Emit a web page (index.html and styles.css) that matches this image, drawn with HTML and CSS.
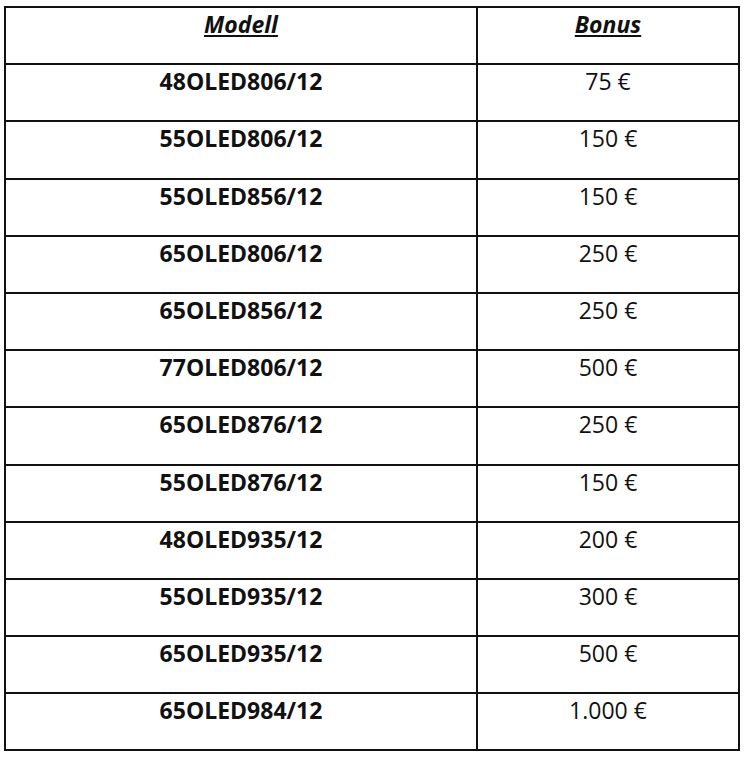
FILE: index.html
```html
<!DOCTYPE html>
<html lang="de">
<head>
<meta charset="utf-8">
<title>Bonus</title>
<link rel="stylesheet" href="styles.css">
</head>
<body>
<div class="page">
<table class="bonus-table">
  <colgroup><col class="col-model"><col class="col-bonus"></colgroup>
  <thead>
    <tr><th><span class="head">Modell</span></th><th><span class="head">Bonus</span></th></tr>
  </thead>
  <tbody>
    <tr><td class="model">48OLED806/12</td><td class="amount">75 €</td></tr>
    <tr><td class="model">55OLED806/12</td><td class="amount">150 €</td></tr>
    <tr><td class="model">55OLED856/12</td><td class="amount">150 €</td></tr>
    <tr><td class="model">65OLED806/12</td><td class="amount">250 €</td></tr>
    <tr><td class="model">65OLED856/12</td><td class="amount">250 €</td></tr>
    <tr><td class="model">77OLED806/12</td><td class="amount">500 €</td></tr>
    <tr><td class="model">65OLED876/12</td><td class="amount">250 €</td></tr>
    <tr><td class="model">55OLED876/12</td><td class="amount">150 €</td></tr>
    <tr><td class="model">48OLED935/12</td><td class="amount">200 €</td></tr>
    <tr><td class="model">55OLED935/12</td><td class="amount">300 €</td></tr>
    <tr><td class="model">65OLED935/12</td><td class="amount">500 €</td></tr>
    <tr><td class="model">65OLED984/12</td><td class="amount">1.000 €</td></tr>
  </tbody>
</table>
</div>
</body>
</html>
```

FILE: styles.css
```css
html, body {
  margin: 0;
  padding: 0;
  background: #ffffff;
}

.page {
  padding: 6px 0 0 4px;
}

.bonus-table {
  border-collapse: collapse;
  table-layout: fixed;
  width: 734px;
  font-family: "Open Sans", "Noto Sans", sans-serif;
  color: #111111;
}

.col-model { width: 472px; }
.col-bonus { width: 262px; }

.bonus-table th,
.bonus-table td {
  border: 2px solid #111111;
  height: 57.2px;
  box-sizing: border-box;
  padding: 1px 4px 0;
  vertical-align: top;
  text-align: center;
  line-height: 30px;
}

.bonus-table th {
  font-weight: 700;
  font-style: italic;
  font-size: 23px;
}

.head {
  text-decoration: underline;
  text-decoration-thickness: 2px;
  text-underline-offset: 2px;
}

.model {
  font-weight: 700;
  font-size: 23px;
}

.amount {
  font-weight: 400;
  font-size: 23px;
}
```
